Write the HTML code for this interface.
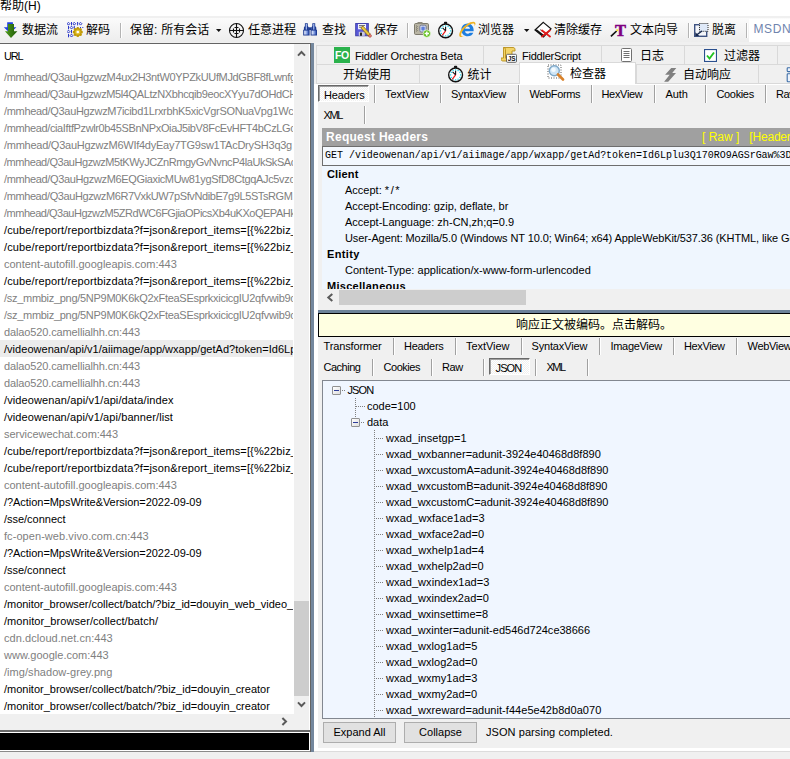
<!DOCTYPE html>
<html><head><meta charset="utf-8"><title>Fiddler</title>
<style>
*{box-sizing:border-box;margin:0;padding:0}
html,body{width:790px;height:759px;overflow:hidden;background:#f0f0f0}
body{position:relative;font-family:"Liberation Sans","Noto Sans CJK SC",sans-serif;font-size:11px;color:#000}
.abs,.r,.tn,.hd,.vd,.t,.sep,.cj{position:absolute;white-space:nowrap}
#menu{left:0;top:0;width:790px;height:16px;background:#fff}
#tb{left:0;top:18px;width:790px;height:24px;background:linear-gradient(#fbfbfb,#f5f5f5 40%,#ededed)}
#tbline{left:0;top:43px;width:311px;height:1px;background:#646464}
.cj{font-family:"Liberation Sans","Noto Sans CJK SC",sans-serif;font-size:12px;line-height:14px}
#list{left:0;top:44px;width:294px;height:670px;background:#fff;overflow:hidden}
.r{left:0;width:293px;height:17px;font-size:11px;line-height:19px;padding-left:4px;overflow:hidden}
.r.g{color:#808080}.r.b{color:#000}.r.sel{background:#ececec}
.t{font-size:11px;line-height:13px}
.sep{width:1px;background:#a0a0a0;box-shadow:1px 0 0 #fff}
.tn{font-size:11px;line-height:16px;height:16px}
.hd{height:1px;background-image:linear-gradient(90deg,#808080 50%,transparent 50%);background-size:2px 1px}
.vd{width:1px;background-image:linear-gradient(#808080 50%,transparent 50%);background-size:1px 2px}
.pm{position:absolute;width:9px;height:9px;border:1px solid #919191;background:linear-gradient(135deg,#fff,#ddd);border-radius:1px}
.pm:after{content:"";position:absolute;left:1px;top:3px;width:5px;height:1px;background:#2d3c9a}
.tab{position:absolute;height:20px;border:1px solid #d9d9d9;background:#f0f0f0}
.sunk{border:1px solid #fff;border-top-color:#696969;border-left-color:#696969;box-shadow:inset 1px 1px 0 #a0a0a0;background:repeating-conic-gradient(#fff 0% 25%,#f0f0f0 0% 50%) 0 0/2px 2px}
.btn{position:absolute;height:21px;border:1px solid #adadad;background:#e1e1e1;font-size:11px;line-height:19px;text-align:center}
</style></head><body>
<!-- menu -->
<div id="menu" class="abs"></div>
<div class="cj" style="left:0;top:-1px;font-size:12px;line-height:15px">帮助(H)</div>
<!-- toolbar -->
<div id="tb" class="abs"></div>
<div id="tbline" class="abs"></div>
<div class="cj" style="left:22px;top:23px">数据流</div>
<div class="cj" style="left:86px;top:23px">解码</div>
<div class="sep" style="left:120px;top:23px;height:15px;background:#b4b4b4;box-shadow:1px 0 0 #fff"></div>
<div class="cj" style="left:130px;top:23px;word-spacing:0.5px">保留: 所有会话</div>
<div class="cj" style="left:248px;top:23px">任意进程</div>
<div class="cj" style="left:322px;top:23px">查找</div>
<div class="cj" style="left:374px;top:23px">保存</div>
<div class="sep" style="left:407px;top:23px;height:15px;background:#b4b4b4;box-shadow:1px 0 0 #fff"></div>
<div class="cj" style="left:478px;top:23px">浏览器</div>
<div class="cj" style="left:554px;top:23px">清除缓存</div>
<div class="cj" style="left:630px;top:23px">文本向导</div>
<div class="sep" style="left:688px;top:23px;height:15px;background:#b4b4b4;box-shadow:1px 0 0 #fff"></div>
<div class="cj" style="left:712px;top:23px">脱离</div>
<div class="abs" style="left:749px;top:19px;width:42px;height:23px;background:#fff"></div>
<div class="sep" style="left:746px;top:23px;height:15px;background:#b4b4b4;box-shadow:1px 0 0 #fff"></div>
<div class="t" style="left:753.5px;top:23px;font-size:12px;color:#7084ad;letter-spacing:0.6px">MSDN</div>

<!-- left list -->
<div id="list" class="abs"></div>
<div class="t" style="left:4px;top:49px;font-size:11px;line-height:14px;letter-spacing:-1.2px">URL</div>
<div class="r g" style="top:68px;letter-spacing:-0.366px">/mmhead/Q3auHgzwzM4ux2H3ntW0YPZkUUfMJdGBF8fLwnfg</div>
<div class="r g" style="top:85px;letter-spacing:-0.387px">/mmhead/Q3auHgzwzM5l4QALtzNXbhcqib9eocXYyu7dOHdCH</div>
<div class="r g" style="top:102px;letter-spacing:-0.324px">/mmhead/Q3auHgzwzM7icibd1LrxrbhK5xicVgrSONuaVpg1Wc</div>
<div class="r g" style="top:119px;letter-spacing:-0.374px">/mmhead/ciaIftfPzwlr0b45SBnNPxOiaJ5ibV8FcEvHFT4bCzLGc</div>
<div class="r g" style="top:136px;letter-spacing:-0.255px">/mmhead/Q3auHgzwzM6WIf4dyEay7TG9sw1TAcDrySH3q3g</div>
<div class="r g" style="top:153px;letter-spacing:-0.44px">/mmhead/Q3auHgzwzM5tKWyJCZnRmgyGvNvncP4laUkSkSAc</div>
<div class="r g" style="top:170px;letter-spacing:-0.359px">/mmhead/Q3auHgzwzM6EQGiaxicMUw81ygSfD8CtgqAJc5vzc</div>
<div class="r g" style="top:187px;letter-spacing:-0.405px">/mmhead/Q3auHgzwzM6R7VxkUW7pSfvNdibE7g9L5STsRGM</div>
<div class="r g" style="top:204px;letter-spacing:-0.488px">/mmhead/Q3auHgzwzM5ZRdWC6FGjiaOPicsXb4uKXoQEPAHk</div>
<div class="r b" style="top:221px;letter-spacing:0.134px">/cube/report/reportbizdata?f=json&amp;report_items=[{%22biz_</div>
<div class="r b" style="top:238px;letter-spacing:0.134px">/cube/report/reportbizdata?f=json&amp;report_items=[{%22biz_</div>
<div class="r g" style="top:255px;letter-spacing:-0.007px">content-autofill.googleapis.com:443</div>
<div class="r b" style="top:272px;letter-spacing:0.134px">/cube/report/reportbizdata?f=json&amp;report_items=[{%22biz_</div>
<div class="r g" style="top:289px;letter-spacing:-0.289px">/sz_mmbiz_png/5NP9M0K6kQ2xFteaSEsprkxicicgIU2qfvwib9c</div>
<div class="r g" style="top:306px;letter-spacing:-0.289px">/sz_mmbiz_png/5NP9M0K6kQ2xFteaSEsprkxicicgIU2qfvwib9c</div>
<div class="r g" style="top:323px;letter-spacing:-0.127px">dalao520.camellialhh.cn:443</div>
<div class="r b sel" style="top:340px;letter-spacing:0.029px">/videowenan/api/v1/aiimage/app/wxapp/getAd?token=Id6Lp</div>
<div class="r g" style="top:357px;letter-spacing:-0.127px">dalao520.camellialhh.cn:443</div>
<div class="r g" style="top:374px;letter-spacing:-0.127px">dalao520.camellialhh.cn:443</div>
<div class="r b" style="top:391px;letter-spacing:0.114px">/videowenan/api/v1/api/data/index</div>
<div class="r b" style="top:408px;letter-spacing:0.096px">/videowenan/api/v1/api/banner/list</div>
<div class="r g" style="top:425px;letter-spacing:-0.045px">servicewechat.com:443</div>
<div class="r b" style="top:442px;letter-spacing:0.134px">/cube/report/reportbizdata?f=json&amp;report_items=[{%22biz_</div>
<div class="r b" style="top:459px;letter-spacing:0.134px">/cube/report/reportbizdata?f=json&amp;report_items=[{%22biz_</div>
<div class="r g" style="top:476px;letter-spacing:-0.007px">content-autofill.googleapis.com:443</div>
<div class="r b" style="top:493px;letter-spacing:-0.046px">/?Action=MpsWrite&amp;Version=2022-09-09</div>
<div class="r b" style="top:510px;letter-spacing:-0.022px">/sse/connect</div>
<div class="r g" style="top:527px;letter-spacing:0.064px">fc-open-web.vivo.com.cn:443</div>
<div class="r b" style="top:544px;letter-spacing:-0.046px">/?Action=MpsWrite&amp;Version=2022-09-09</div>
<div class="r b" style="top:561px;letter-spacing:-0.022px">/sse/connect</div>
<div class="r g" style="top:578px;letter-spacing:-0.007px">content-autofill.googleapis.com:443</div>
<div class="r b" style="top:595px;letter-spacing:-0.03px">/monitor_browser/collect/batch/?biz_id=douyin_web_video_</div>
<div class="r b" style="top:612px;letter-spacing:0.057px">/monitor_browser/collect/batch/</div>
<div class="r g" style="top:629px;letter-spacing:0.055px">cdn.dcloud.net.cn:443</div>
<div class="r g" style="top:646px;letter-spacing:0.008px">www.google.com:443</div>
<div class="r g" style="top:663px;letter-spacing:0.05px">/img/shadow-grey.png</div>
<div class="r b" style="top:680px;letter-spacing:-0.009px">/monitor_browser/collect/batch/?biz_id=douyin_creator</div>
<div class="r b" style="top:697px;letter-spacing:-0.009px">/monitor_browser/collect/batch/?biz_id=douyin_creator</div>
<!-- left vscroll -->
<div class="abs" style="left:294px;top:44px;width:15px;height:670px;background:#f0f0f0"></div>
<div class="abs" style="left:294px;top:601px;width:15px;height:95px;background:#cdcdcd"></div>
<svg class="abs" style="left:297px;top:49.500px" width="9" height="7" viewBox="0 0 9 7"><path d="M1 5.600L4.500 2 8 5.600" fill="none" stroke="#5a5a5a" stroke-width="2"/></svg>
<svg class="abs" style="left:297px;top:701px" width="9" height="7" viewBox="0 0 9 7"><path d="M1 1.400L4.500 5 8 1.400" fill="none" stroke="#5a5a5a" stroke-width="2"/></svg>
<!-- left hscroll -->
<div class="abs" style="left:0;top:714px;width:309px;height:16px;background:#f0f0f0"></div>
<svg class="abs" style="left:281px;top:717px" width="7" height="9" viewBox="0 0 7 9"><path d="M1.400 1L5 4.500 1.400 8" fill="none" stroke="#5a5a5a" stroke-width="2"/></svg>
<div class="abs" style="left:309px;top:44px;width:1px;height:707px;background:#fff"></div>
<div class="abs" style="left:0;top:730px;width:310px;height:2px;background:#6a6a6a"></div>
<div class="abs" style="left:0;top:732px;width:310px;height:19px;background:#fff"></div>
<!-- black bar -->
<div class="abs" style="left:0;top:733px;width:309px;height:17px;background:#000"></div>
<div class="abs" style="left:0;top:751px;width:311px;height:1px;background:#8a8a8a"></div>
<!-- splitter -->
<div class="abs" style="left:310px;top:43px;width:1px;height:709px;background:#646464"></div>
<div class="abs" style="left:311px;top:43px;width:3px;height:709px;background:#74879d"></div>
<!-- right page frame -->
<div class="abs" style="left:314px;top:84px;width:476px;height:667px;background:#fff"></div>
<div class="abs" style="left:318px;top:85px;width:472px;height:663px;background:#f0f0f0"></div>
<div class="abs" style="left:314px;top:751px;width:476px;height:1px;background:#dcdcdc"></div>

<!-- right top tabs -->
<div class="tab" style="left:316px;top:45px;width:168px"></div>
<div class="tab" style="left:483px;top:45px;width:119px"></div>
<div class="tab" style="left:601px;top:45px;width:84px"></div>
<div class="tab" style="left:684px;top:45px;width:94px"></div>
<div class="tab" style="left:777px;top:45px;width:30px"></div>
<div class="tab" style="left:316px;top:64px;width:104px"></div>
<div class="tab" style="left:419px;top:64px;width:101px"></div>
<div class="tab" style="left:636px;top:64px;width:123px"></div>
<div class="tab" style="left:758px;top:64px;width:40px"></div>
<div class="abs" style="left:519px;top:62px;width:117px;height:22px;background:#fff;border:1px solid #d9d9d9;border-bottom:none"></div>
<div class="abs" style="left:334px;top:47px;width:16px;height:16px;background:#2bb24c;color:#fff;font-size:10.500px;line-height:17px;text-align:center;font-weight:bold;letter-spacing:-0.2px">FO</div>
<div class="t" style="left:355px;top:50px;letter-spacing:-0.15px">Fiddler Orchestra Beta</div>
<div class="t" style="left:522px;top:50px;letter-spacing:-0.23px">FiddlerScript</div>
<div class="cj" style="left:640px;top:49px">日志</div>
<div class="cj" style="left:724px;top:49px">过滤器</div>
<div class="cj" style="left:343px;top:68px">开始使用</div>
<div class="cj" style="left:467.5px;top:68px">统计</div>
<div class="cj" style="left:570px;top:67px">检查器</div>
<div class="cj" style="left:683px;top:68px">自动响应</div>

<!-- inspector tabs -->
<!-- toolbar icons -->
<svg class="abs" style="left:3px;top:21px" width="16" height="18" viewBox="0 0 16 18"><defs><linearGradient id="gg" x1="0" x2="1"><stop offset="0" stop-color="#4f9a1c"/><stop offset="1" stop-color="#1f5a08"/></linearGradient></defs><path d="M4.200 1.200h5.700v5h3.500l-6.300 6-6.300-6h3.400z" fill="#1f3fe0"/><path d="M5 3h6v7.300h3.400L8 17.100 1.900 10.300H5z" fill="url(#gg)"/></svg>
<svg class="abs" style="left:67px;top:22px" width="17" height="16" viewBox="0 0 17 16"><g fill="none" stroke="#2a36c8" stroke-width="1"><path d="M0.1 1.7L1.5 0.3 2.9 1.7 1.5 3.1z"/><path d="M4.5 0.0V3.4"/><path d="M5.9 1.7L7.3 0.3 8.7 1.7 7.3 3.1z"/><path d="M10.6 0.0V3.4"/><path d="M12.1 1.7L13.5 0.3 14.9 1.7 13.5 3.1z"/><path d="M1.5 3.9V7.3"/><path d="M3.1 5.6L4.5 4.2 5.9 5.6 4.5 7.0z"/><path d="M7.3 3.9V7.3"/><path d="M0.1 9.6L1.5 8.2 2.9 9.6 1.5 11.0z"/><path d="M4.5 7.9V11.3"/><path d="M1.5 11.9V15.3"/><path d="M3.1 13.6L4.5 12.2 5.9 13.6 4.5 15.0z"/></g><rect x="10.2" y="5" width="1" height="1" fill="#2a36c8"/><rect x="13" y="5" width="1" height="1" fill="#2a36c8"/><rect x="15.3" y="5" width="1" height="1" fill="#2a36c8"/><g fill="#c29a06"><circle cx="14.40" cy="10.00" r="1.5"/><circle cx="13.35" cy="12.55" r="1.5"/><circle cx="10.80" cy="13.60" r="1.5"/><circle cx="8.25" cy="12.55" r="1.5"/><circle cx="7.20" cy="10.00" r="1.5"/><circle cx="8.25" cy="7.45" r="1.5"/><circle cx="10.80" cy="6.40" r="1.5"/><circle cx="13.35" cy="7.45" r="1.5"/><circle cx="10.8" cy="10.0" r="3.6"/></g><circle cx="10.8" cy="10.0" r="2.6" fill="#e2c233"/><circle cx="10.8" cy="10.0" r="1.3" fill="#fff"/></svg>
<svg class="abs" style="left:216px;top:29px" width="6" height="4" viewBox="0 0 6 4"><path d="M0 0h5.4L2.7 3z" fill="#111"/></svg>
<svg class="abs" style="left:228px;top:22px" width="17" height="17" viewBox="0 0 17 17"><g fill="none" stroke="#111" stroke-width="1.1"><circle cx="8.5" cy="8.5" r="7"/><path d="M8.500 1.500v14M1.500 8.500h14M6.500 5.500h4M6.500 11.500h4M5.500 6.500v4M11.500 6.500v4"/></g></svg>
<svg class="abs" style="left:303px;top:22px" width="16" height="15" viewBox="0 0 16 15"><defs><linearGradient id="bg1" x1="0" x2="1"><stop offset="0" stop-color="#eef3ff"/><stop offset=".55" stop-color="#8fa8e6"/><stop offset="1" stop-color="#3557b4"/></linearGradient></defs><path d="M1.900 1.200h2.900v2.800l1.100 1.400v2l.7.700v5.400h-6.400v-5.400l.7-.7v-2l1-1.400z" fill="#1d3b92"/><path d="M9.300 1.200h2.900v2.800l1.100 1.400v2l.7.700v5.400h-6.400v-5.400l.7-.7v-2l1-1.400z" fill="#1d3b92"/><rect x="5.500" y="5.300" width="3" height="2.700" fill="#1d3b92"/><rect x="1.200" y="8.600" width="4.400" height="4" fill="url(#bg1)"/><rect x="8.600" y="8.600" width="4.400" height="4" fill="url(#bg1)"/><rect x="2.700" y="2" width="1.300" height="5.600" fill="#9db3ec"/><rect x="10.100" y="2" width="1.300" height="5.600" fill="#9db3ec"/></svg>
<svg class="abs" style="left:355px;top:22px" width="17" height="16" viewBox="0 0 17 16"><rect x=".7" y="1.500" width="12.600" height="12.300" fill="#5a5ad8" stroke="#3a3aa8" stroke-width=".9"/><rect x="3" y="2" width="8" height="5.300" fill="#f2f2fa"/><path d="M4 3.500h6M4 5.200h4" stroke="#555" stroke-width=".8"/><rect x="3.800" y="9.800" width="6" height="4" fill="#c9c9dc"/><rect x="5" y="10.600" width="2" height="3.200" fill="#222"/><path d="M5.800 5.800l2.200-1.700 7.300 8-2.100 1.800z" fill="#e8c63e" stroke="#7a5c10" stroke-width=".7"/><path d="M13.100 13.900l2.200-1.800 1.200 1.400c.3 1-.9 2-2 1.800z" fill="#e07a70" stroke="#9a3a30" stroke-width=".5"/></svg>
<svg class="abs" style="left:414px;top:21px" width="17" height="17" viewBox="0 0 17 17"><rect x=".5" y="2.500" width="14" height="11" rx="1.200" fill="#b9b5a4" stroke="#7d7a6c"/><rect x="3.500" y="1" width="5" height="2" fill="#8d8a7c"/><path d="M2 4.500l1.500 1-1.500 1 1.500 1-1.500 1 1.500 1-1.500 1" fill="none" stroke="#7d7a6c" stroke-width=".8"/><rect x="5.800" y="4.200" width="6.400" height="6.800" rx="1.500" fill="#cdd6ee" stroke="#6f7690" stroke-width=".9"/><rect x="7.400" y="5.800" width="3.300" height="3.600" rx=".8" fill="#5f7fdc"/><circle cx="12.800" cy="12.600" r="3.700" fill="#63c11f" stroke="#eaf7df" stroke-width=".7"/><path d="M12.800 10.400v4.400M10.600 12.600h4.400" stroke="#fff" stroke-width="1.500"/></svg>
<svg class="abs" style="left:437px;top:21px" width="17" height="18" viewBox="0 0 17 18"><rect x="7" y=".8" width="3.200" height="2.200" rx=".8" fill="#111"/><circle cx="8.6" cy="9.9" r="6.900" fill="#fff" stroke="#111" stroke-width="1.400"/><rect x="13.00" y="9.30" width="1.200" height="1.200" fill="#19d3ea"/><rect x="12.33" y="11.80" width="1.200" height="1.200" fill="#19d3ea"/><rect x="10.50" y="13.63" width="1.200" height="1.200" fill="#19d3ea"/><rect x="8.00" y="14.30" width="1.200" height="1.200" fill="#19d3ea"/><rect x="5.50" y="13.63" width="1.200" height="1.200" fill="#19d3ea"/><rect x="3.67" y="11.80" width="1.200" height="1.200" fill="#19d3ea"/><rect x="3.00" y="9.30" width="1.200" height="1.200" fill="#19d3ea"/><rect x="3.67" y="6.80" width="1.200" height="1.200" fill="#19d3ea"/><rect x="5.50" y="4.97" width="1.200" height="1.200" fill="#19d3ea"/><rect x="8.00" y="4.30" width="1.200" height="1.200" fill="#19d3ea"/><rect x="10.50" y="4.97" width="1.200" height="1.200" fill="#19d3ea"/><rect x="12.33" y="6.80" width="1.200" height="1.200" fill="#19d3ea"/><path d="M8.6 9.9V5.800M8.6 9.9L5.600 6.800" stroke="#111" stroke-width="1.100"/><path d="M8.6 9.9L5.200 14.300" stroke="#e81818" stroke-width="1.200"/></svg>
<svg class="abs" style="left:458px;top:20px" width="19" height="19" viewBox="0 0 17 17"><path d="M8.600 3.200c-3.300 0-5.600 2.500-5.600 5.700 0 3.300 2.400 5.600 5.700 5.600 2.300 0 4.200-1.200 5-3.200h-3.200c-.4.600-1 .9-1.800.9-1.300 0-2.200-.8-2.400-2.200h7.700c.3-3.900-2-6.800-5.400-6.800zm-2.200 4.700c.2-1.300 1-2.100 2.200-2.100s2 .8 2.100 2.100z" fill="#1e7ee0"/><path d="M1.500 14.800c-1.500-2.300 1.500-7.800 6.500-11 3.500-2.200 6.500-2.800 7.400-1.400.5.800.1 2.100-.8 3.500.4-1.200.4-2-.1-2.400-1-.8-3.800.3-6.500 2.400-3.900 3-5.800 6.800-5 8.100.4.600 1.300.6 2.500.2-1.800 1.100-3.400 1.500-4 .6z" fill="#f0b323"/></svg>
<svg class="abs" style="left:524px;top:29px" width="6" height="4" viewBox="0 0 6 4"><path d="M0 0h5.400L2.700 3z" fill="#111"/></svg>
<svg class="abs" style="left:534px;top:21px" width="18" height="17" viewBox="0 0 18 17"><path d="M9.300 1.400l7.700 6.400-7.500 8.200-8.500-7z" fill="#fff" stroke="#111" stroke-width="1.200"/><path d="M1.500 9.500l7.800 6 .4-1.700-7-5.600z" fill="#111"/><path d="M6 8.500l5.500 4.300" stroke="#555" stroke-width=".9"/><path d="M7.400 9l9.200 7M16.400 9L7.400 16" stroke="#e31b1b" stroke-width="1.700"/></svg>
<svg class="abs" style="left:610px;top:22px" width="17" height="16" viewBox="0 0 17 16"><path d="M.9 14.300L6.600 9" stroke="#111" stroke-width="1.700"/><rect x="6.300" y="7.300" width="1.800" height="1.800" fill="#f5e020"/><text x="5" y="13.700" font-family="Liberation Serif,serif" font-weight="bold" font-size="16.500" fill="#800080" stroke="#800080" stroke-width=".5">T</text></svg>
<svg class="abs" style="left:694px;top:23px" width="15" height="15" viewBox="0 0 15 15"><rect x=".7" y="1.700" width="12" height="11.600" fill="#f4f6fa" stroke="#3d5280" stroke-width="1.400"/><rect x="5.500" y=".5" width="8.500" height="7.800" fill="#dfe9f8" stroke="#222" stroke-dasharray="1 1"/><path d="M8 8L2.500 12" stroke="#16284e" stroke-width="1.500"/><path d="M1.300 9.200v3.800h4z" fill="#16284e"/></svg>
<!-- tab icons -->
<svg class="abs" style="left:501px;top:46px" width="17" height="17" viewBox="0 0 17 17"><path d="M2.500 1.500h9.500c1.500 0 2 1 2 2v1.500h-3v8c0 1.200-.8 2-2 2h-7c-1.200 0-2-.8-2-2v-1h2.500z" fill="#f3d468" stroke="#b8901c" stroke-width=".9"/><path d="M2.500 1.500c1.200 0 2 .8 2 2v9" fill="none" stroke="#b8901c" stroke-width=".9"/><rect x="5.500" y="8.300" width="10" height="8" rx="1" fill="#fff" stroke="#555" stroke-width=".9"/><text x="6.700" y="15" font-family="Liberation Sans,sans-serif" font-weight="bold" font-size="6.500" fill="#111">JS</text></svg>
<svg class="abs" style="left:621px;top:48px" width="11" height="14" viewBox="0 0 11 14"><rect x=".5" y=".5" width="10" height="13" rx="1" fill="#fff" stroke="#707070"/><path d="M2.500 3.500h6M2.500 5.500h6M2.500 7.500h6M2.500 9.500h6" stroke="#707070"/></svg>
<svg class="abs" style="left:704px;top:49px" width="13" height="13" viewBox="0 0 13 13"><rect x=".5" y=".5" width="12" height="12" fill="#fff" stroke="#2a4f8e" stroke-width="1.200"/><path d="M3 6.500l2.500 3 4.500-6" fill="none" stroke="#22c322" stroke-width="1.900"/></svg>
<svg class="abs" style="left:447px;top:64.5px" width="17" height="18" viewBox="0 0 17 18"><rect x="7" y=".8" width="3.200" height="2.200" rx=".8" fill="#111"/><circle cx="8.6" cy="9.9" r="6.900" fill="#fff" stroke="#111" stroke-width="1.400"/><rect x="13.00" y="9.30" width="1.200" height="1.200" fill="#19d3ea"/><rect x="12.33" y="11.80" width="1.200" height="1.200" fill="#19d3ea"/><rect x="10.50" y="13.63" width="1.200" height="1.200" fill="#19d3ea"/><rect x="8.00" y="14.30" width="1.200" height="1.200" fill="#19d3ea"/><rect x="5.50" y="13.63" width="1.200" height="1.200" fill="#19d3ea"/><rect x="3.67" y="11.80" width="1.200" height="1.200" fill="#19d3ea"/><rect x="3.00" y="9.30" width="1.200" height="1.200" fill="#19d3ea"/><rect x="3.67" y="6.80" width="1.200" height="1.200" fill="#19d3ea"/><rect x="5.50" y="4.97" width="1.200" height="1.200" fill="#19d3ea"/><rect x="8.00" y="4.30" width="1.200" height="1.200" fill="#19d3ea"/><rect x="10.50" y="4.97" width="1.200" height="1.200" fill="#19d3ea"/><rect x="12.33" y="6.80" width="1.200" height="1.200" fill="#19d3ea"/><path d="M8.6 9.9V5.800M8.6 9.9L5.600 6.800" stroke="#111" stroke-width="1.100"/><path d="M8.6 9.9L5.200 14.300" stroke="#e81818" stroke-width="1.200"/></svg>
<svg class="abs" style="left:546.500px;top:64px" width="18" height="17" viewBox="0 0 18 17"><rect x="1" y="1" width="13" height="13" fill="none" stroke="#555" stroke-width="1" stroke-dasharray="1 1.500"/><circle cx="7.300" cy="6.800" r="5" fill="#cfe6f7" stroke="#7fa8c8" stroke-width="1.400"/><circle cx="6.500" cy="5.800" r="2.300" fill="#f4fbff"/><path d="M11 10.500l5 5" stroke="#d9822b" stroke-width="2.600" stroke-linecap="round"/></svg>
<svg class="abs" style="left:663px;top:68px" width="14" height="14" viewBox="0 0 14 14"><path d="M8.200 .1h5.100l-4.100 4.800h3.800l-7.800 8.800h-4.100l5.600-7h-4.600z" fill="#808080"/></svg>
<svg class="abs" style="left:786px;top:66px" width="4" height="17" viewBox="0 0 4 17"><rect x="1.200" y="1.800" width="5" height="3.800" rx=".8" fill="#eef3fb" stroke="#3f6fa8" stroke-width="1.100"/><rect x="1.200" y="7.800" width="5" height="8" rx=".8" fill="#eef3fb" stroke="#3f6fa8" stroke-width="1.100"/></svg>

<div class="abs sunk" style="left:318px;top:85px;width:51px;height:17px"></div>
<div class="t" style="left:324px;top:89px;letter-spacing:-0.14px">Headers</div>
<div class="sep" style="left:374px;top:85px;height:18px"></div>
<div class="t" style="left:385px;top:88px">TextView</div>
<div class="sep" style="left:440px;top:85px;height:18px"></div>
<div class="t" style="left:451px;top:88px;letter-spacing:-0.23px">SyntaxView</div>
<div class="sep" style="left:518px;top:85px;height:18px"></div>
<div class="t" style="left:529.5px;top:88px;letter-spacing:-0.37px">WebForms</div>
<div class="sep" style="left:591px;top:85px;height:18px"></div>
<div class="t" style="left:601.5px;top:88px;letter-spacing:-0.32px">HexView</div>
<div class="sep" style="left:654px;top:85px;height:18px"></div>
<div class="t" style="left:665.5px;top:88px;letter-spacing:-0.11px">Auth</div>
<div class="sep" style="left:705px;top:85px;height:18px"></div>
<div class="t" style="left:716.5px;top:88px;letter-spacing:-0.35px">Cookies</div>
<div class="sep" style="left:765px;top:85px;height:18px"></div>
<div class="t" style="left:776px;top:88px;letter-spacing:-0.4px">Raw</div>
<div class="t" style="left:323.5px;top:109px;letter-spacing:-1.4px">XML</div>
<div class="sep" style="left:364px;top:106px;height:18px"></div>

<!-- request headers -->
<div class="abs" style="left:322px;top:128px;width:468px;height:18px;background:#a0a0a0"></div>
<div class="t" style="left:326px;top:130px;font-size:12px;line-height:14px;font-weight:bold;color:#fff;letter-spacing:0.28px">Request Headers</div>
<div class="t" style="left:702px;top:130px;font-size:12px;line-height:14px;color:#ffff00">[ Raw ]&nbsp;&nbsp; <span style="letter-spacing:-0.2px">[Header</span></div>
<div class="abs" style="left:322px;top:146px;width:468px;height:20px;background:#f3f8fe;border:1px solid #6e6e6e;border-right:none"></div>
<div class="t" style="left:325px;top:150px;font-family:'Liberation Mono',monospace;font-size:10px;line-height:12px;letter-spacing:-0.02px">GET /videowenan/api/v1/aiimage/app/wxapp/getAd?token=Id6Lplu3Q170RO9AGSrGaw%3D</div>
<div class="abs" style="left:322px;top:166px;width:468px;height:123px;background:#eff6fe;overflow:hidden">
<div class="t" style="left:5px;top:2px;font-weight:bold;letter-spacing:0.17px">Client</div>
<div class="t" style="left:23px;top:18px;">Accept: <span style="letter-spacing:1.6px">*/*</span></div>
<div class="t" style="left:23px;top:34px;letter-spacing:-0.035px">Accept-Encoding: gzip, deflate, br</div>
<div class="t" style="left:23px;top:50px">Accept-Language: zh-CN,zh;q=0.9</div>
<div class="t" style="left:23px;top:66px;letter-spacing:-0.1px">User-Agent: Mozilla/5.0 (Windows NT 10.0; Win64; x64) AppleWebKit/537.36 (KHTML, like Gecko)</div>
<div class="t" style="left:5px;top:82px;font-weight:bold;letter-spacing:0.37px">Entity</div>
<div class="t" style="left:23px;top:98px;letter-spacing:0.026px">Content-Type: application/x-www-form-urlencoded</div>
<div class="t" style="left:5px;top:114px;font-weight:bold;letter-spacing:0.29px">Miscellaneous</div>
</div>
<!-- hscroll -->
<div class="abs" style="left:322px;top:289px;width:468px;height:17px;background:#f0f0f0"></div>
<div class="abs" style="left:339px;top:290px;width:187px;height:15px;background:#cdcdcd"></div>
<svg class="abs" style="left:326px;top:293px" width="8" height="9" viewBox="0 0 8 9"><path d="M6.300 .9L2.300 4.500 6.300 8.100" fill="none" stroke="#5a5a5a" stroke-width="2"/></svg>
<!-- splitter h -->
<div class="abs" style="left:318px;top:310px;width:472px;height:3px;background:#6d8299"></div>
<!-- yellow bar -->
<div class="abs" style="left:318px;top:313px;width:480px;height:24px;background:#ffffe1;border:1px solid #000"></div>
<div class="cj" style="left:516px;top:318px">响应正文被编码。点击解码。</div>

<!-- response tabs -->
<div class="t" style="left:323.5px;top:340px;letter-spacing:-0.13px">Transformer</div>
<div class="sep" style="left:393px;top:338px;height:17px"></div>
<div class="t" style="left:404px;top:340px;letter-spacing:-0.3px">Headers</div>
<div class="sep" style="left:455px;top:338px;height:17px"></div>
<div class="t" style="left:466px;top:340px;letter-spacing:-0.04px">TextView</div>
<div class="sep" style="left:521px;top:338px;height:17px"></div>
<div class="t" style="left:531.5px;top:340px;letter-spacing:-0.16px">SyntaxView</div>
<div class="sep" style="left:599px;top:338px;height:17px"></div>
<div class="t" style="left:610.5px;top:340px;letter-spacing:-0.31px">ImageView</div>
<div class="sep" style="left:673px;top:338px;height:17px"></div>
<div class="t" style="left:684px;top:340px;letter-spacing:-0.37px">HexView</div>
<div class="sep" style="left:736px;top:338px;height:17px"></div>
<div class="t" style="left:747.5px;top:340px;letter-spacing:-0.3px">WebView</div>
<div class="t" style="left:323.5px;top:361px;letter-spacing:-0.48px">Caching</div>
<div class="sep" style="left:372px;top:359px;height:17px"></div>
<div class="t" style="left:383.5px;top:361px;letter-spacing:-0.46px">Cookies</div>
<div class="sep" style="left:431px;top:359px;height:17px"></div>
<div class="t" style="left:442px;top:361px;letter-spacing:-0.4px">Raw</div>
<div class="sep" style="left:483px;top:359px;height:17px"></div>
<div class="abs sunk" style="left:489px;top:358px;width:41px;height:17px"></div>
<div class="t" style="left:495.5px;top:362px;letter-spacing:-0.86px">JSON</div>
<div class="sep" style="left:535px;top:359px;height:17px"></div>
<div class="t" style="left:546.5px;top:361px;letter-spacing:-1.5px">XML</div>
<div class="sep" style="left:587px;top:359px;height:17px"></div>

<!-- tree -->
<div class="abs" style="left:322px;top:380px;width:480px;height:339px;background:#f0f6ff;border:1px solid #828790"></div>
<div class="pm" style="left:332px;top:386px"></div>
<div class="hd" style="left:342px;top:390px;width:4px"></div>
<div class="tn" style="left:347.5px;top:382px;letter-spacing:-0.9px">JSON</div>
<div class="vd" style="left:355px;top:398px;height:20px"></div>
<div class="hd" style="left:356px;top:406px;width:9px"></div>
<div class="tn" style="left:367px;top:398px">code=100</div>
<div class="pm" style="left:351px;top:418px"></div>
<div class="hd" style="left:361px;top:422px;width:4px"></div>
<div class="tn" style="left:367px;top:414px">data</div>
<div class="vd" style="left:374px;top:430px;height:288px"></div>
<div class="tn" style="left:386px;top:430px;letter-spacing:0.056px">wxad_insetgp=1</div><div class="hd" style="left:376px;top:438px;width:8px"></div>
<div class="tn" style="left:386px;top:446px;letter-spacing:0.011px">wxad_wxbanner=adunit-3924e40468d8f890</div><div class="hd" style="left:376px;top:454px;width:8px"></div>
<div class="tn" style="left:386px;top:462px;letter-spacing:-0.014px">wxad_wxcustomA=adunit-3924e40468d8f890</div><div class="hd" style="left:376px;top:470px;width:8px"></div>
<div class="tn" style="left:386px;top:478px;letter-spacing:-0.043px">wxad_wxcustomB=adunit-3924e40468d8f890</div><div class="hd" style="left:376px;top:486px;width:8px"></div>
<div class="tn" style="left:386px;top:494px;letter-spacing:-0.03px">wxad_wxcustomC=adunit-3924e40468d8f890</div><div class="hd" style="left:376px;top:502px;width:8px"></div>
<div class="tn" style="left:386px;top:510px;letter-spacing:0.116px">wxad_wxface1ad=3</div><div class="hd" style="left:376px;top:518px;width:8px"></div>
<div class="tn" style="left:386px;top:526px;letter-spacing:0.085px">wxad_wxface2ad=0</div><div class="hd" style="left:376px;top:534px;width:8px"></div>
<div class="tn" style="left:386px;top:542px;letter-spacing:0.085px">wxad_wxhelp1ad=4</div><div class="hd" style="left:376px;top:550px;width:8px"></div>
<div class="tn" style="left:386px;top:558px;letter-spacing:0.048px">wxad_wxhelp2ad=0</div><div class="hd" style="left:376px;top:566px;width:8px"></div>
<div class="tn" style="left:386px;top:574px;letter-spacing:0.057px">wxad_wxindex1ad=3</div><div class="hd" style="left:376px;top:582px;width:8px"></div>
<div class="tn" style="left:386px;top:590px;letter-spacing:0.027px">wxad_wxindex2ad=0</div><div class="hd" style="left:376px;top:598px;width:8px"></div>
<div class="tn" style="left:386px;top:606px;letter-spacing:0.016px">wxad_wxinsettime=8</div><div class="hd" style="left:376px;top:614px;width:8px"></div>
<div class="tn" style="left:386px;top:622px;letter-spacing:0.004px">wxad_wxinter=adunit-ed546d724ce38666</div><div class="hd" style="left:376px;top:630px;width:8px"></div>
<div class="tn" style="left:386px;top:638px;letter-spacing:0.045px">wxad_wxlog1ad=5</div><div class="hd" style="left:376px;top:646px;width:8px"></div>
<div class="tn" style="left:386px;top:654px;letter-spacing:0.045px">wxad_wxlog2ad=0</div><div class="hd" style="left:376px;top:662px;width:8px"></div>
<div class="tn" style="left:386px;top:670px;letter-spacing:0.049px">wxad_wxmy1ad=3</div><div class="hd" style="left:376px;top:678px;width:8px"></div>
<div class="tn" style="left:386px;top:686px;letter-spacing:0.028px">wxad_wxmy2ad=0</div><div class="hd" style="left:376px;top:694px;width:8px"></div>
<div class="tn" style="left:386px;top:702px;letter-spacing:0.042px">wxad_wxreward=adunit-f44e5e42b8d0a070</div><div class="hd" style="left:376px;top:710px;width:8px"></div>
<!-- bottom -->
<div class="btn" style="left:323px;top:722px;width:73px">Expand All</div>
<div class="btn" style="left:404px;top:722px;width:73px">Collapse</div>
<div class="t" style="left:486px;top:726px;letter-spacing:0.07px">JSON parsing completed.</div>
<div class="abs" style="left:0;top:752px;width:790px;height:7px;background:#f0f0f0"></div>
</body></html>
